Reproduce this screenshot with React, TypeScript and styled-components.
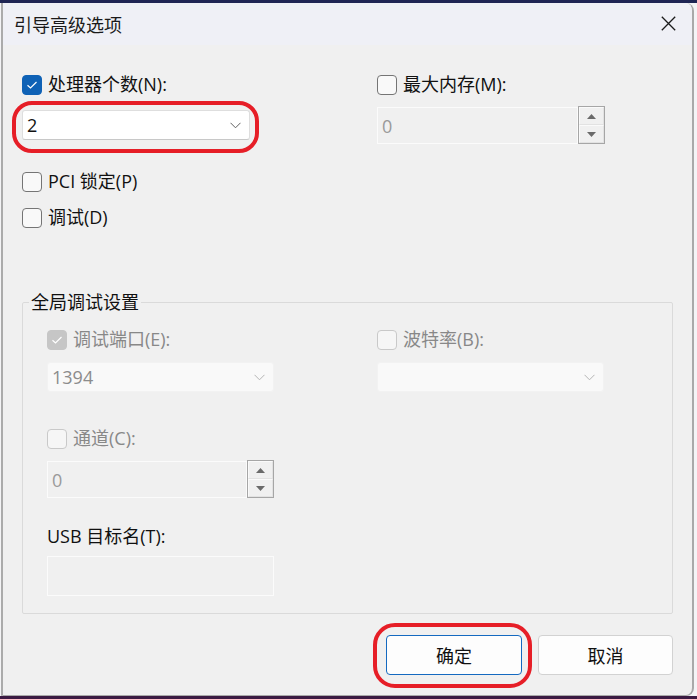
import React from "react";
import styled, { createGlobalStyle } from "styled-components";

const GlobalStyle = createGlobalStyle`
  html, body { margin: 0; padding: 0; }
  body {
    width: 697px;
    height: 699px;
    overflow: hidden;
    background: #f4f4f6;
    font-family: "Open Sans", "Noto Sans CJK SC", sans-serif;
  }
`;

const Screen = styled.div`
  width: 697px;
  height: 699px;
  box-sizing: border-box;
  padding: 3px 3px 0 1px;
  background: linear-gradient(
    to bottom,
    #1f2554 0,
    #1f2554 3px,
    #f4f4f6 3px,
    #f4f4f6 696px,
    #3b1a42 696px
  );
`;

const Dialog = styled.div`
  width: 693px;
  height: 693px;
  box-sizing: border-box;
  border-left: 2px solid #ababab;
  border-right: 2px solid #a9a9a9;
  border-bottom: 1px solid #a9a9a9;
  border-radius: 0 8px 8px 0;
  overflow: hidden;
  display: flex;
  flex-direction: column;
  background: #f0f0f0;
`;

const TitleBar = styled.div`
  height: 42px;
  flex: none;
  display: flex;
  align-items: center;
  justify-content: space-between;
  padding: 0 16px 0 11px;
  background: #eff0f6;
  font-family: "Noto Sans CJK SC", sans-serif;
  font-size: 18px;
  line-height: 24px;
  color: #1a1a1a;
`;

const CloseButton = styled.div`
  width: 15px;
  height: 15px;
  display: flex;
  margin-top: -1px;
`;

const Body = styled.div`
  flex: 1;
  display: flex;
  flex-direction: column;
  padding: 30px 19px 0 19px;
  font-size: 18px;
  line-height: 24px;
  color: #111;
`;

const TwoCol = styled.div<{ $left: number; $gap: number }>`
  display: grid;
  grid-template-columns: ${(p) => p.$left}px ${(p) => p.$left}px;
  column-gap: ${(p) => p.$gap}px;
  align-items: start;
`;

const Column = styled.div`
  display: flex;
  flex-direction: column;
  align-items: flex-start;
`;

const CheckRow = styled.div<{ $disabled?: boolean; $mt?: number }>`
  display: flex;
  align-items: center;
  gap: 6px;
  height: 20px;
  margin-top: ${(p) => p.$mt ?? 0}px;
  white-space: nowrap;
  color: ${(p) => (p.$disabled ? "#888888" : "#111")};
`;

const Box = styled.span<{ $checked?: boolean; $disabled?: boolean }>`
  width: 20px;
  height: 20px;
  box-sizing: border-box;
  border-radius: 4px;
  flex: none;
  display: flex;
  align-items: center;
  justify-content: center;
  background: ${(p) =>
    p.$checked ? (p.$disabled ? "#c6c6c6" : "#0f62b6") : p.$disabled ? "#f6f6f6" : "#f9f9f9"};
  border: 1px solid
    ${(p) =>
      p.$checked ? (p.$disabled ? "#c6c6c6" : "#0f62b6") : p.$disabled ? "#c9c9c9" : "#757575"};
`;

const Label = styled.span`
  position: relative;
  top: -1px;
`;

const ComboBox = styled.div<{ $disabled?: boolean; $w: number; $mt?: number }>`
  width: ${(p) => p.$w}px;
  height: 30px;
  margin-top: ${(p) => p.$mt ?? 0}px;
  box-sizing: border-box;
  display: flex;
  align-items: center;
  justify-content: space-between;
  padding: 0 8px 0 4px;
  border-radius: 3px;
  background: ${(p) => (p.$disabled ? "#f9f9f9" : "#ffffff")};
  border: 1px solid ${(p) => (p.$disabled ? "#f2f2f2" : "#dedede")};
  border-bottom-color: ${(p) => (p.$disabled ? "#f2f2f2" : "#c8c8c8")};
  color: ${(p) => (p.$disabled ? "#8c8c8c" : "#111")};
`;

const NumberField = styled.div<{ $w: number; $mt: number }>`
  width: ${(p) => p.$w}px;
  height: 37px;
  margin-top: ${(p) => p.$mt}px;
  display: flex;
`;

const NumberInput = styled.div`
  flex: 1;
  box-sizing: border-box;
  height: 37px;
  border: 1px solid #fbfbfb;
  background: #f0f0f0;
  padding-left: 4px;
  display: flex;
  align-items: center;
  color: #9a9a9a;
`;

const Spinner = styled.div`
  width: 27px;
  height: 38px;
  margin-top: -1px;
  box-sizing: border-box;
  border: 1px solid #a6a6a6;
  display: flex;
  flex-direction: column;
  background: #f0f0f0;
`;

const SpinButton = styled.div`
  flex: 1;
  box-sizing: border-box;
  border: 1px solid #fafafa;
  border-right-color: #e2e2e2;
  border-bottom-color: #e2e2e2;
  display: flex;
  align-items: center;
  justify-content: center;
`;

const GroupBox = styled.fieldset`
  margin: 62px 0 0 0;
  padding: 0;
  min-width: 0;
  border: 1px solid #dadada;
  border-radius: 2px;
`;

const GroupTitle = styled.legend`
  margin-left: 6px;
  padding: 0 2px;
  font-size: 18px;
  line-height: 24px;
  color: #111;
`;

const GroupInner = styled.div`
  padding: 16px 0 17px 24px;
  display: flex;
  flex-direction: column;
`;

const PlainLabel = styled.div<{ $mt: number }>`
  margin-top: ${(p) => p.$mt}px;
  height: 24px;
  white-space: nowrap;
`;

const TextBox = styled.div`
  width: 227px;
  height: 40px;
  margin-top: 8px;
  box-sizing: border-box;
  border: 1px solid #fbfbfb;
  background: #f0f0f0;
`;

const ButtonRow = styled.div`
  display: flex;
  justify-content: flex-end;
  gap: 16px;
  margin-top: 21px;
`;

const Button = styled.button<{ $primary?: boolean; $w: number }>`
  width: ${(p) => p.$w}px;
  height: 40px;
  box-sizing: border-box;
  border-radius: 4px;
  background: #fdfdfd;
  border: 1px solid ${(p) => (p.$primary ? "#1469c0" : "#d2d2d2")};
  font-family: "Noto Sans CJK SC", sans-serif;
  font-size: 18px;
  line-height: 24px;
  color: #111;
  padding: 0;
`;

const Highlight = styled.div<{ $mt?: number }>`
  position: relative;
  margin-top: ${(p) => p.$mt ?? 0}px;
`;

const Ring = styled.div<{ $t: number; $r: number; $b: number; $l: number; $rad: number }>`
  position: absolute;
  top: ${(p) => p.$t}px;
  right: ${(p) => p.$r}px;
  bottom: ${(p) => p.$b}px;
  left: ${(p) => p.$l}px;
  border: 4px solid #e61e27;
  border-radius: ${(p) => p.$rad}px;
  pointer-events: none;
`;

const Chevron = ({ color }: { color: string }) => (
  <svg width="11" height="7" viewBox="0 0 11 7">
    <path d="M0.5 0.8 L5.5 5.8 L10.5 0.8" fill="none" stroke={color} strokeWidth="1" />
  </svg>
);

const Tick = () => (
  <svg width="12" height="10" viewBox="0 0 12 10">
    <path d="M1.5 5.2 L4.5 8 L10.5 2" fill="none" stroke="#fff" strokeWidth="1.2" />
  </svg>
);

const Arrow = ({ up }: { up?: boolean }) => (
  <svg width="9" height="5" viewBox="0 0 9 5">
    <path d={up ? "M0 5 L4.5 0 L9 5 Z" : "M0 0 L4.5 5 L9 0 Z"} fill="#6a6a6a" />
  </svg>
);

const Check = ({
  label,
  checked,
  disabled,
  mt,
}: {
  label: string;
  checked?: boolean;
  disabled?: boolean;
  mt?: number;
}) => (
  <CheckRow $disabled={disabled} $mt={mt}>
    <Box $checked={checked} $disabled={disabled}>
      {checked && <Tick />}
    </Box>
    <Label>{label}</Label>
  </CheckRow>
);

const Number = ({ w, mt, value }: { w: number; mt: number; value: string }) => (
  <NumberField $w={w} $mt={mt}>
    <NumberInput>{value}</NumberInput>
    <Spinner>
      <SpinButton>
        <Arrow up />
      </SpinButton>
      <SpinButton>
        <Arrow />
      </SpinButton>
    </Spinner>
  </NumberField>
);

export default function App() {
  return (
    <>
      <GlobalStyle />
      <Screen>
        <Dialog>
          <TitleBar>
            <span>引导高级选项</span>
            <CloseButton>
              <svg width="15" height="15" viewBox="0 0 15 15">
                <path d="M0.8 0.8 L14.2 14.2 M14.2 0.8 L0.8 14.2" stroke="#1b1b1b" strokeWidth="1.3" />
              </svg>
            </CloseButton>
          </TitleBar>
          <Body>
            <TwoCol $left={228} $gap={127}>
              <Column>
                <Check label="处理器个数(N):" checked />
                <Highlight $mt={15}>
                  <ComboBox $w={228}>
                    <span>2</span>
                    <Chevron color="#5f5f5f" />
                  </ComboBox>
                  <Ring $t={-9} $r={-9} $b={-13} $l={-10} $rad={20} />
                </Highlight>
              </Column>
              <Column>
                <Check label="最大内存(M):" />
                <Number w={228} mt={12} value="0" />
              </Column>
            </TwoCol>

            <Column>
              <Check label="PCI 锁定(P)" mt={28} />
              <Check label="调试(D)" mt={16} />
            </Column>

            <GroupBox>
              <GroupTitle>全局调试设置</GroupTitle>
              <GroupInner>
                <TwoCol $left={227} $gap={103}>
                  <Column>
                    <Check label="调试端口(E):" checked disabled />
                    <ComboBox $w={227} $mt={12} $disabled>
                      <span>1394</span>
                      <Chevron color="#b4b4b4" />
                    </ComboBox>
                  </Column>
                  <Column>
                    <Check label="波特率(B):" disabled />
                    <ComboBox $w={227} $mt={12} $disabled>
                      <span />
                      <Chevron color="#b4b4b4" />
                    </ComboBox>
                  </Column>
                </TwoCol>
                <Column>
                  <Check label="通道(C):" disabled mt={37} />
                  <Number w={227} mt={12} value="0" />
                  <PlainLabel $mt={26}>USB 目标名(T):</PlainLabel>
                  <TextBox />
                </Column>
              </GroupInner>
            </GroupBox>

            <ButtonRow>
              <Highlight>
                <Button $primary $w={136}>确定</Button>
                <Ring $t={-12} $r={-10} $b={-13} $l={-13} $rad={22} />
              </Highlight>
              <Button $w={135}>取消</Button>
            </ButtonRow>
          </Body>
        </Dialog>
      </Screen>
    </>
  );
}
